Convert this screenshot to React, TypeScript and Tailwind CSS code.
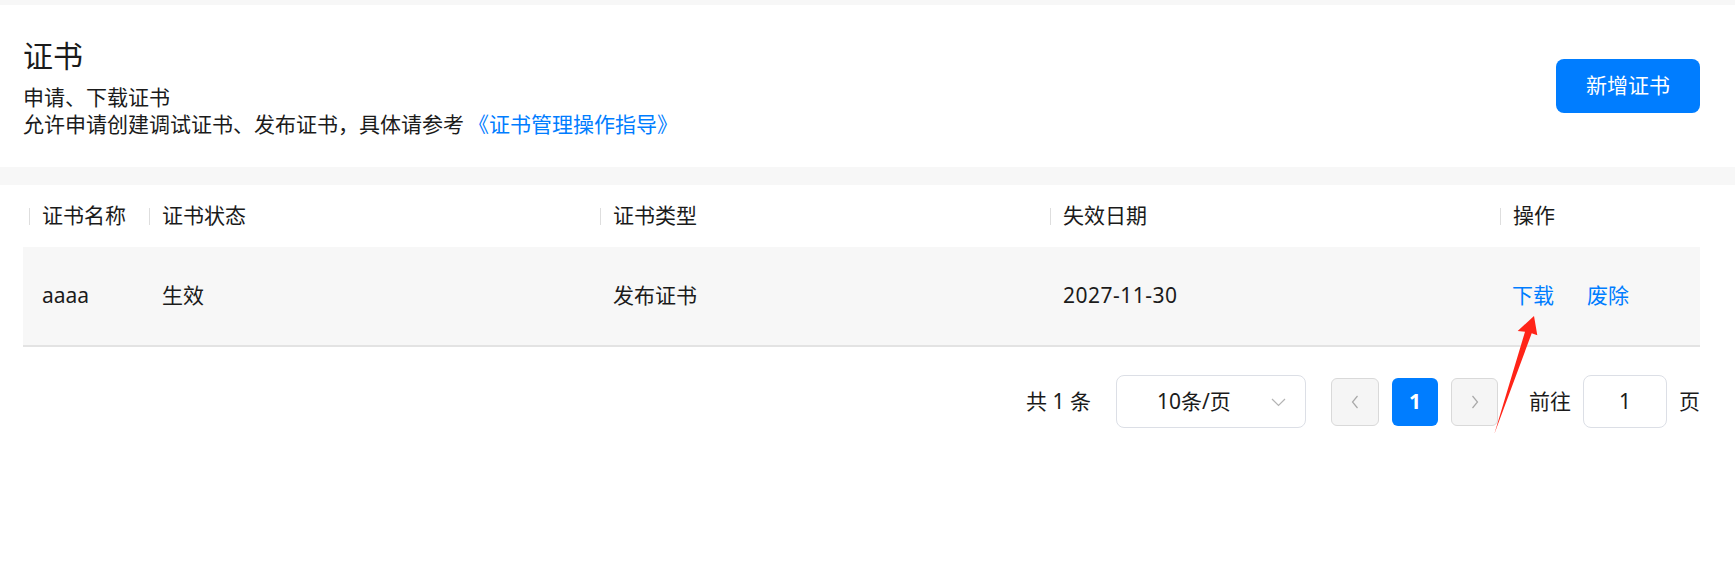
import React from "react";

const cols = ["w-[120px]", "w-[451px]", "w-[450px]", "w-[450px]", "flex-1"];

function HeaderCell({ label, w }: { label: string; w: string }) {
  return (
    <div className={`${w} flex items-center pl-[6px]`}>
      <span className="w-px h-[17px] bg-[#dedede]" />
      <span className="ml-[12px]">{label}</span>
    </div>
  );
}

export default function App() {
  return (
    <div className="relative w-full min-h-screen bg-white text-[#1b1b1b] font-['Noto_Sans','Noto_Sans_CJK_SC',sans-serif] text-[21px]">
      <div className="h-[5px] bg-[#f7f7f7]" />
      {/* header */}
      <div className="h-[162px] pl-[23px] pr-[35px] pt-[32px] flex justify-between items-start">
        <div>
          <div className="text-[30px] leading-[38px]">证书</div>
          <div className="mt-[9px] leading-[27px]">
            <div>申请、下载证书</div>
            <div>
              允许申请创建调试证书、发布证书，具体请参考
              <span className="text-[#007dff] ml-[4px]">《证书管理操作指导》</span>
            </div>
          </div>
        </div>
        <button className="mt-[22px] w-[144px] h-[54px] rounded-[8px] bg-[#007dff] text-white text-[21px] flex items-center justify-center">
          新增证书
        </button>
      </div>
      <div className="h-[18px] bg-[#f7f7f7]" />
      {/* table */}
      <div className="pl-[23px] pr-[35px]">
        <div className="flex h-[62px]">
          <HeaderCell label="证书名称" w={cols[0]} />
          <HeaderCell label="证书状态" w={cols[1]} />
          <HeaderCell label="证书类型" w={cols[2]} />
          <HeaderCell label="失效日期" w={cols[3]} />
          <HeaderCell label="操作" w={cols[4]} />
        </div>
        <div className="flex h-[100px] bg-[#f7f7f7] border-b-[2px] border-[#e3e3e3] items-center">
          <div className={`${cols[0]} pl-[19px]`}>aaaa</div>
          <div className={`${cols[1]} pl-[19px]`}>生效</div>
          <div className={`${cols[2]} pl-[19px]`}>发布证书</div>
          <div className={`${cols[3]} pl-[19px] tracking-[0.5px]`}>2027-11-30</div>
          <div className={`${cols[4]} pl-[18px] flex gap-[33px] text-[#007dff]`}>
            <span>下载</span>
            <span>废除</span>
          </div>
        </div>
        {/* pagination */}
        <div className="mt-[28px] flex justify-end items-center h-[53px]">
          <span className="whitespace-pre">共 1 条</span>
          <div className="ml-[25px] w-[190px] h-[53px] rounded-[8px] border border-[#dcdfe6] flex items-center relative">
            <span className="ml-[40px]">10条/页</span>
            <svg className="absolute right-[19px] top-[22px]" width="15" height="9" viewBox="0 0 15 9">
              <path d="M1 1 L7.5 7.5 L14 1" fill="none" stroke="#b4b4b4" strokeWidth="1.2" />
            </svg>
          </div>
          <div className="ml-[25px] w-[48px] h-[48px] rounded-[6px] border border-[#d9d9d9] bg-[#f5f5f5] flex items-center justify-center">
            <svg width="8" height="14" viewBox="0 0 8 14">
              <path d="M6.5 1 L1.5 7 L6.5 13" fill="none" stroke="#a8a8a8" strokeWidth="1.2" />
            </svg>
          </div>
          <div className="ml-[13px] w-[46px] h-[48px] rounded-[6px] bg-[#007dff] text-white font-bold flex items-center justify-center">
            1
          </div>
          <div className="ml-[13px] w-[47px] h-[48px] rounded-[6px] border border-[#d9d9d9] bg-[#f5f5f5] flex items-center justify-center">
            <svg width="8" height="14" viewBox="0 0 8 14">
              <path d="M1.5 1 L6.5 7 L1.5 13" fill="none" stroke="#a8a8a8" strokeWidth="1.2" />
            </svg>
          </div>
          <span className="ml-[31px]">前往</span>
          <div className="ml-[12px] w-[84px] h-[53px] rounded-[8px] border border-[#dcdfe6] flex items-center justify-center">
            1
          </div>
          <span className="ml-[12px]">页</span>
        </div>
      </div>
      {/* annotation arrow */}
      <svg className="absolute left-[1480px] top-[300px] pointer-events-none" width="70" height="140" viewBox="0 0 70 140">
        <polygon
          points="54,16 37.7,31 45,31.7 14.3,134 51.7,33.3 57.3,35.3"
          fill="#ff2418"
        />
      </svg>
    </div>
  );
}
